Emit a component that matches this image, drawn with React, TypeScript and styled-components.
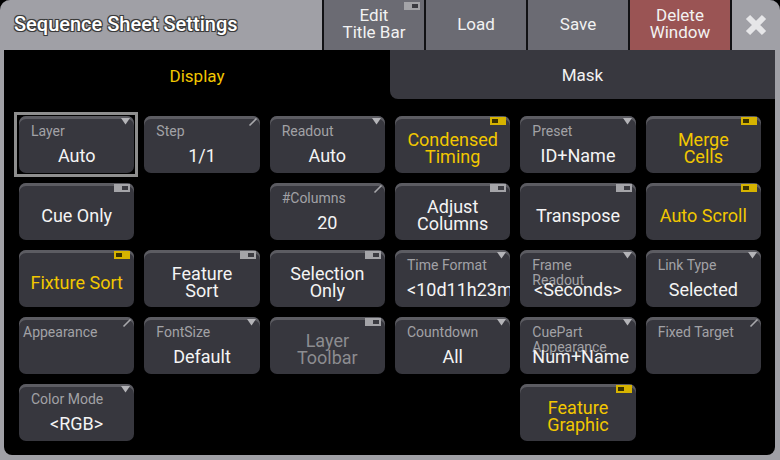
import React from "react";
import styled, { createGlobalStyle } from "styled-components";

const GlobalStyle = createGlobalStyle`
  html, body {
    margin: 0;
    width: 780px;
    height: 460px;
    overflow: hidden;
    background: #000;
    font-family: Roboto, "Liberation Sans", sans-serif;
  }
`;

const FRAME = "#a0a0a6";
const YELLOW = "#f2c700";

const Window = styled.div`
  width: 780px;
  height: 460px;
  display: flex;
  flex-direction: column;
  background: ${FRAME};
  border-radius: 10px 10px 0 0;
`;

const TitleBar = styled.div`
  height: 50px;
  display: flex;
  gap: 2px;
  background: #111114;
  border-radius: 10px 10px 0 0;
`;

const Title = styled.div`
  flex: 1;
  display: flex;
  align-items: center;
  padding: 0 0 2px 14px;
  background: ${FRAME};
  border-top-left-radius: 10px;
  color: #fff;
  font-size: 20px;
  font-weight: 500;
  text-shadow: -1px -1px 0 #3a3a3a, 1px -1px 0 #3a3a3a, -1px 1px 0 #3a3a3a,
    1px 1px 0 #3a3a3a, 0 0 2px #3a3a3a;
`;

const BarButton = styled.div<{ $danger?: boolean }>`
  position: relative;
  width: 100px;
  display: flex;
  align-items: center;
  justify-content: center;
  padding-bottom: 2px;
  text-align: center;
  background: ${(p) => (p.$danger ? "#9a5454" : "#6b6b73")};
  color: #f2f2f2;
  font-size: 17px;
  line-height: 17px;
`;

const CloseButton = styled.div`
  width: 48px;
  display: flex;
  align-items: center;
  justify-content: center;
  background: ${FRAME};
  border-top-right-radius: 10px;
`;

const Panel = styled.div`
  flex: 1;
  margin: 0 5px 5px 4px;
  background: #000;
  border-radius: 0 0 8px 8px;
  display: flex;
  flex-direction: column;
`;

const Tabs = styled.div`
  height: 50px;
  display: grid;
  grid-template-columns: 386px 1fr;
  align-items: start;
`;

const Tab = styled.div<{ $active?: boolean }>`
  height: ${(p) => (p.$active ? 50 : 49)}px;
  display: flex;
  align-items: center;
  justify-content: center;
  padding-top: 1px;
  box-sizing: border-box;
  font-size: 17px;
  color: ${(p) => (p.$active ? YELLOW : "#f2f2f2")};
  background: ${(p) => (p.$active ? "#000" : "#38383f")};
  border-bottom-left-radius: ${(p) => (p.$active ? 0 : 8)}px;
`;

const Grid = styled.div`
  display: grid;
  grid-template-columns: repeat(6, 1fr);
  grid-auto-rows: 57px;
  gap: 10px;
  padding: 16px 14px 0 15px;
`;

const SelectionFrame = styled.div`
  position: relative;
  display: flex;

  &::after {
    content: "";
    position: absolute;
    inset: -4px -4px -4px -5px;
    border: 3px solid #8e8e8e;
    pointer-events: none;
  }
`;

const Tile = styled.div<{ $plain?: boolean }>`
  position: relative;
  flex: 1;
  overflow: hidden;
  background: #37373e;
  box-shadow: inset 0 3px 0 #5c5c62;
  border-radius: 7px;
  ${(p) =>
    p.$plain
      ? `
    display: flex;
    align-items: center;
    justify-content: center;
    padding: 7px 6px 0;
  `
      : `
    display: grid;
    grid-template-rows: 15px 20px;
    row-gap: 7px;
    align-content: start;
    padding: 8px 12px 0;
  `}
`;

const Label = styled.div<{ $inset?: number }>`
  font-size: 14px;
  line-height: 15px;
  color: #a2a2a6;
  margin-left: ${(p) => p.$inset ?? 0}px;
`;

const Value = styled.div`
  font-size: 18px;
  line-height: 20px;
  color: #f4f4f4;
  text-align: center;
  white-space: nowrap;
`;

const ToggleText = styled.div<{ $on?: boolean; $dim?: boolean }>`
  font-size: 18px;
  line-height: 17px;
  text-align: center;
  color: ${(p) => (p.$on ? YELLOW : p.$dim ? "#8c8c90" : "#f4f4f4")};
`;

const Corner = styled.div`
  position: absolute;
  top: 1px;
  right: 4px;
  display: flex;
`;

type Kind = "drop" | "edit" | "on" | "off";

const CornerIcon = ({ kind }: { kind: Kind }) => {
  if (kind === "drop")
    return (
      <svg width="9" height="8" viewBox="0 0 9 8">
        <polygon points="0,1 9,1 4.5,7.5" fill="#b4b4b8" />
      </svg>
    );
  if (kind === "edit")
    return (
      <svg width="10" height="10" viewBox="0 0 10 10" style={{ marginRight: -2 }}>
        <line x1="1.5" y1="8.5" x2="8.5" y2="1.5" stroke="#a8a8ac" strokeWidth="1.6" />
      </svg>
    );
  const on = kind === "on";
  return (
    <svg width="16" height="8" viewBox="0 0 16 8">
      <rect width="16" height="8" fill={on ? "#d6b300" : "#a4a4a8"} />
      <rect x={on ? 2 : 8} y="2" width="6" height="4" fill={on ? "#3a3200" : "#3c3c42"} />
    </svg>
  );
};

type Cell =
  | null
  | { label: string; value?: string; kind: "drop" | "edit"; selected?: boolean; inset?: number }
  | { text: string[]; kind: "on" | "off"; dim?: boolean };

const cells: Cell[] = [
  { label: "Layer", value: "Auto", kind: "drop", selected: true },
  { label: "Step", value: "1/1", kind: "edit" },
  { label: "Readout", value: "Auto", kind: "drop" },
  { text: ["Condensed", "Timing"], kind: "on" },
  { label: "Preset", value: "ID+Name", kind: "drop" },
  { text: ["Merge", "Cells"], kind: "on" },

  { text: ["Cue Only"], kind: "off" },
  null,
  { label: "#Columns", value: "20", kind: "edit" },
  { text: ["Adjust", "Columns"], kind: "off" },
  { text: ["Transpose"], kind: "off" },
  { text: ["Auto Scroll"], kind: "on" },

  { text: ["Fixture Sort"], kind: "on" },
  { text: ["Feature", "Sort"], kind: "off" },
  { text: ["Selection", "Only"], kind: "off" },
  { label: "Time Format", value: "<10d11h23m", kind: "drop" },
  { label: "Frame Readout", value: "<Seconds>", kind: "drop" },
  { label: "Link Type", value: "Selected", kind: "drop" },

  { label: "Appearance", kind: "edit", inset: -8 },
  { label: "FontSize", value: "Default", kind: "drop" },
  { text: ["Layer", "Toolbar"], kind: "off", dim: true },
  { label: "Countdown", value: "All", kind: "drop" },
  { label: "CuePart Appearance", value: "Num+Name", kind: "drop" },
  { label: "Fixed Target", kind: "edit" },

  { label: "Color Mode", value: "<RGB>", kind: "drop" },
  null,
  null,
  null,
  { text: ["Feature", "Graphic"], kind: "on" },
  null,
];

const SettingTile = ({ cell }: { cell: Cell }) => {
  if (!cell) return <div />;
  if ("text" in cell)
    return (
      <Tile $plain>
        <ToggleText $on={cell.kind === "on"} $dim={cell.dim}>
          {cell.text.map((t) => (
            <div key={t}>{t}</div>
          ))}
        </ToggleText>
        <Corner>
          <CornerIcon kind={cell.kind} />
        </Corner>
      </Tile>
    );
  const tile = (
    <Tile>
      <Label $inset={cell.inset}>{cell.label}</Label>
      <Value>{cell.value}</Value>
      <Corner>
        <CornerIcon kind={cell.kind} />
      </Corner>
    </Tile>
  );
  return cell.selected ? <SelectionFrame>{tile}</SelectionFrame> : tile;
};

const BarToggle = styled.div`
  position: absolute;
  top: 2px;
  right: 4px;
  display: flex;
`;

export default function App() {
  return (
    <>
      <GlobalStyle />
      <Window>
        <TitleBar>
          <Title>Sequence Sheet Settings</Title>
          <BarButton>
            Edit
            <br />
            Title Bar
            <BarToggle>
              <CornerIcon kind="off" />
            </BarToggle>
          </BarButton>
          <BarButton>Load</BarButton>
          <BarButton>Save</BarButton>
          <BarButton $danger>
            Delete
            <br />
            Window
          </BarButton>
          <CloseButton>
            <svg width="24" height="22" viewBox="0 0 24 22">
              <path d="M4 3 L20 19 M20 3 L4 19" stroke="#e6e6e8" strokeWidth="6" />
            </svg>
          </CloseButton>
        </TitleBar>
        <Panel>
          <Tabs>
            <Tab $active>Display</Tab>
            <Tab>Mask</Tab>
          </Tabs>
          <Grid>
            {cells.map((c, i) => (
              <SettingTile key={i} cell={c} />
            ))}
          </Grid>
        </Panel>
      </Window>
    </>
  );
}
